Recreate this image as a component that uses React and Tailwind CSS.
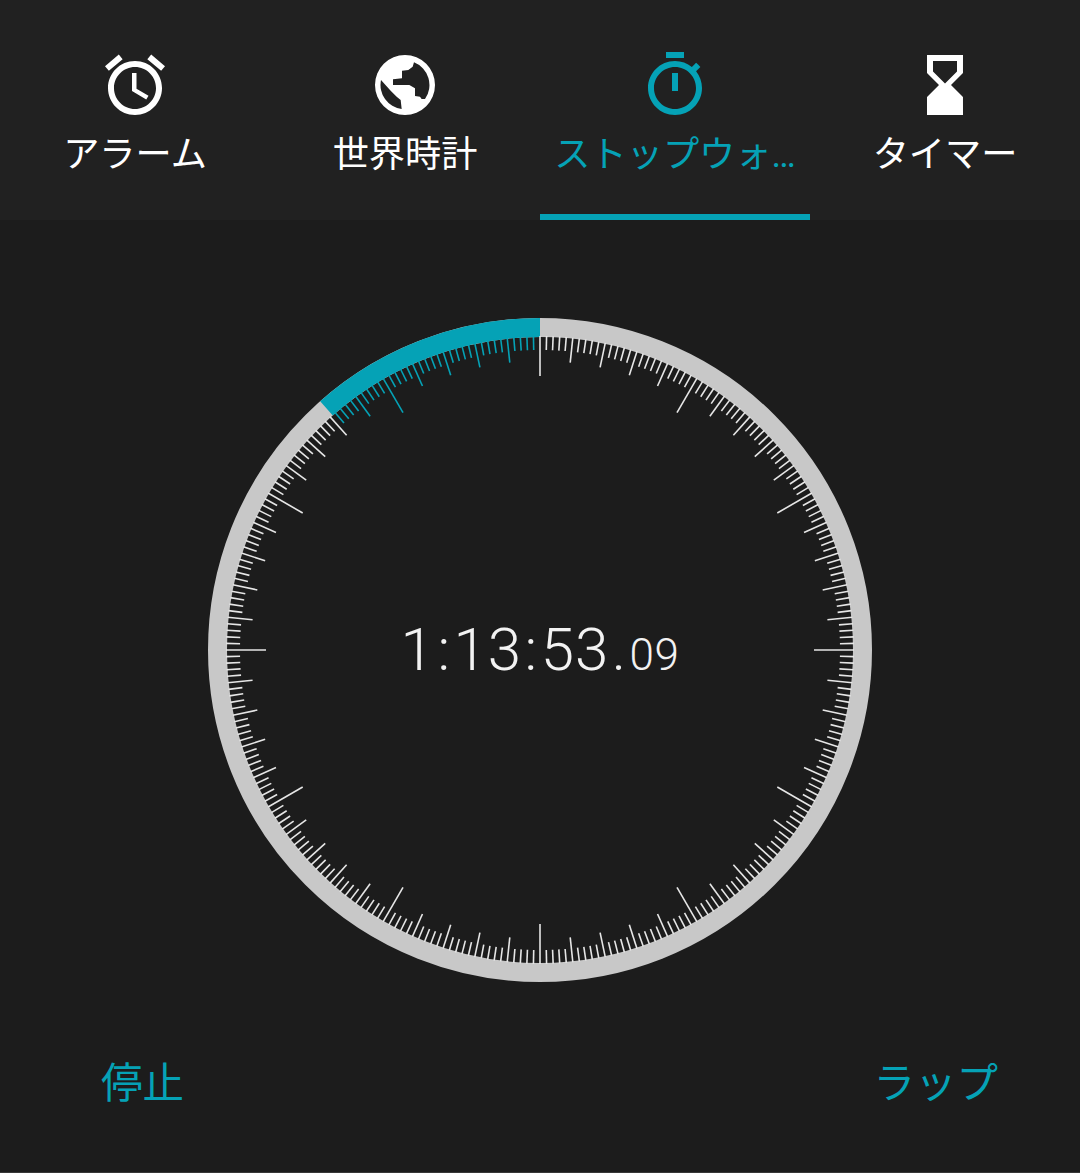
const CYAN = '#05a2b6';

const tabs = [
  { label: 'アラーム', icon: 'M22 5.72l-4.6-3.86-1.29 1.53 4.6 3.86L22 5.72zM7.88 3.39L6.6 1.86 2 5.71l1.29 1.53 4.59-3.85zM12.5 8H11v6l4.75 2.85.75-1.23-4-2.37V8zM12 4c-4.97 0-9 4.03-9 9s4.03 9 9 9 9-4.03 9-9-4.03-9-9-9zm0 16c-3.87 0-7-3.13-7-7s3.13-7 7-7 7 3.13 7 7-3.13 7-7 7z' },
  { label: '世界時計', globe: true },
  { label: 'ストップウォ…', active: true, icon: 'M15 1H9v2h6V1zm-4 13h2V8h-2v6zm8.03-6.61l1.42-1.42c-.43-.51-.9-.99-1.41-1.41l-1.42 1.42C16.07 4.74 14.12 4 12 4c-4.97 0-9 4.03-9 9s4.02 9 9 9 9-4.03 9-9c0-2.12-.74-4.07-1.97-5.61zM12 20c-3.87 0-7-3.13-7-7s3.13-7 7-7 7 3.13 7 7-3.13 7-7 7z' },
  { label: 'タイマー', icon: 'M18 22l-.01-6L14 12l3.99-4.01L18 2H6v6l4 4-4 3.99V22h12zM8 7.5V4h8v3.5l-4 4-4-4z' },
];

// seconds hand position for 53.09s
const progress = (53.09 / 60) * 360;

function polar(r, deg) {
  const a = (deg * Math.PI) / 180;
  return [332 + r * Math.sin(a), 332 - r * Math.cos(a)];
}

function GlobeIcon() {
  return (
    <svg width="72" height="72" viewBox="-3 -3 216 216" fill="currentColor" className="block">
      <path
        fillRule="evenodd"
        d="M105 15a90 90 0 1 0 0 180a90 90 0 1 0 0-180z
           M33 90L62 122L80 140L92 150L95 177A73 73 0 0 1 33 90z
           M132 37A73 73 0 0 1 165 147L155 147L150 140L135 138L135 115L118 105L69 105L69 88L96 85L96 62L115 60L128 50z"
      />
    </svg>
  );
}

function Dial() {
  const ticks = [];
  for (let i = 0; i < 300; i++) {
    const deg = i * 1.2;
    const inner = i % 25 === 0 ? 274 : i % 5 === 0 ? 289 : 300;
    const [x1, y1] = polar(314, deg);
    const [x2, y2] = polar(inner, deg);
    const lit = deg > progress;
    ticks.push(
      <line key={i} x1={x1} y1={y1} x2={x2} y2={y2} stroke={lit ? CYAN : '#e6e6e6'} strokeWidth="1.6" />
    );
  }
  const [sx, sy] = polar(322.5, progress);
  const [ex, ey] = polar(322.5, 360);
  return (
    <svg width="664" height="664" viewBox="0 0 664 664" className="block">
      <circle cx="332" cy="332" r="322.5" fill="none" stroke="#c8c8c8" strokeWidth="19" />
      <path d={`M${sx} ${sy} A322.5 322.5 0 0 1 ${ex} ${ey}`} fill="none" stroke={CYAN} strokeWidth="19" />
      {ticks}
    </svg>
  );
}

export default function App() {
  return (
    <div className="w-[1080px] h-[1173px] flex flex-col bg-[#1c1c1c] border-b border-[#383838] overflow-hidden" style={{ fontFamily: 'Roboto, "Noto Sans CJK JP", sans-serif' }}>
      <div className="grid grid-cols-4 h-[220px] bg-[#212121]">
        {tabs.map(t => (
          <div key={t.label} className={`flex flex-col items-center pt-[49px] ${t.active ? 'border-b-[6px] border-[#05a2b6] text-[#05a2b6]' : 'text-white'}`}>
            {t.globe ? <GlobeIcon /> : (
              <svg width="72" height="72" viewBox="0 0 24 24" fill="currentColor" className="block"><path d={t.icon} /></svg>
            )}
            <span className="text-[36.2px] leading-[52px] mt-[8px] whitespace-nowrap">{t.label}</span>
          </div>
        ))}
      </div>

      <div className="relative mt-[98px] mx-auto w-[664px] h-[664px]">
        <Dial />
        <div className="absolute inset-0 flex items-center justify-center text-[#f2f2f2] font-light">
          <span className="text-[60px] leading-none tracking-[1px]">
            1<span className="px-[2.5px]">:</span>13<span className="px-[2.5px]">:</span>53<span className="px-[2.5px]">.</span>
            <span className="text-[44px] tracking-[0.5px]">09</span>
          </span>
        </div>
      </div>

      <div className="flex justify-between items-center mt-[73px] pl-[101px] pr-[82px] text-[#05a2b6] text-[41.5px] leading-[58px]">
        <span>停止</span>
        <span>ラップ</span>
      </div>
    </div>
  );
}
